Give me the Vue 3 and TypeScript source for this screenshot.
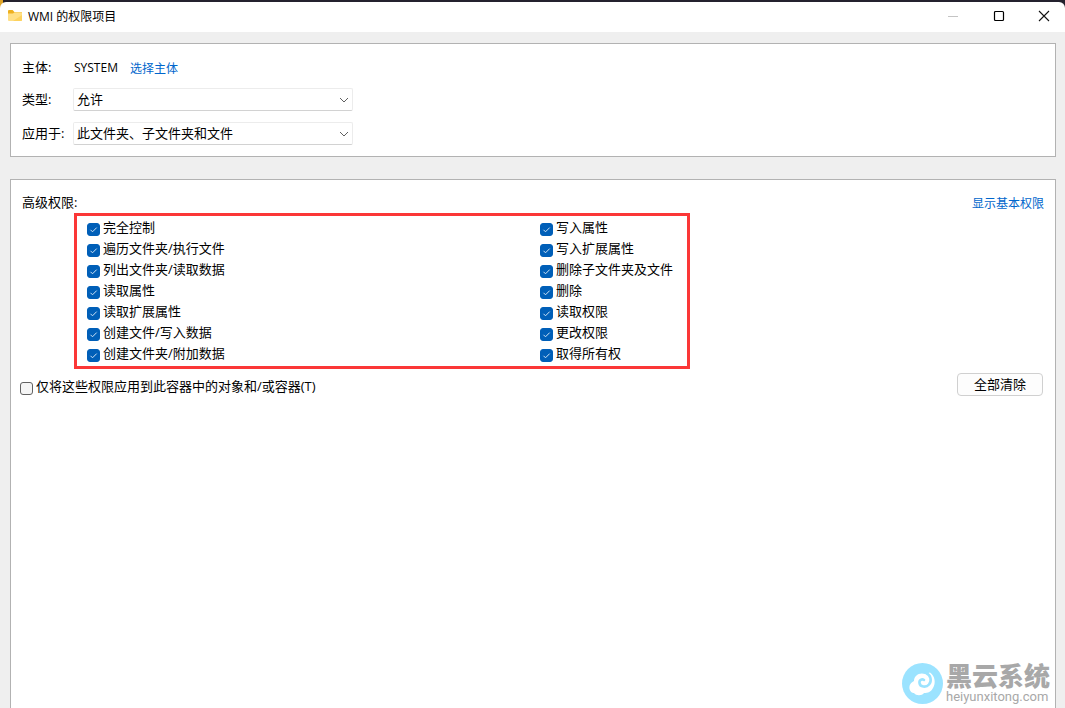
<script setup lang="ts">
import { ref } from 'vue'

interface Permission {
  id: string
  label: string
  checked: boolean
}

const make = (prefix: string, labels: string[]): Permission[] =>
  labels.map((label, i) => ({ id: `${prefix}-${i}`, label, checked: true }))

const columns = ref<Permission[][]>([
  make('left', [
    '完全控制',
    '遍历文件夹/执行文件',
    '列出文件夹/读取数据',
    '读取属性',
    '读取扩展属性',
    '创建文件/写入数据',
    '创建文件夹/附加数据',
  ]),
  make('right', ['写入属性', '写入扩展属性', '删除子文件夹及文件', '删除', '读取权限', '更改权限', '取得所有权']),
])

const kind = ref('允许')
const scope = ref('此文件夹、子文件夹和文件')
const onlyContainer = ref(false)

function clearAll(): void {
  columns.value.forEach((col) => col.forEach((p) => (p.checked = false)))
}
</script>

<template>
  <div class="window">
    <header class="titlebar">
      <svg class="folder" width="14" height="12" viewBox="0 0 14 12" aria-hidden="true">
        <path d="M0 1Q0 0 1 0H4.6L6.4 2H13Q14 2 14 3V6H0Z" fill="#eeb01f" />
        <path d="M0 3.4H5L6.6 2.2H13Q14 2.2 14 3.2V10Q14 11 13 11H1Q0 11 0 10Z" fill="#ffdf85" />
        <path d="M14 5V10Q14 11 13 11H5Z" fill="#fdd25e" />
      </svg>
      <h1>WMI 的权限项目</h1>
      <button type="button" aria-label="最小化" disabled>
        <svg width="12" height="12" viewBox="0 0 12 12"><path d="M1 6.5H11" stroke="#c4c4c4" /></svg>
      </button>
      <button type="button" aria-label="最大化">
        <svg width="12" height="12" viewBox="0 0 12 12">
          <rect x="1.5" y="1.5" width="9" height="9" rx="1" fill="none" stroke="#000" stroke-width="1.2" />
        </svg>
      </button>
      <button type="button" aria-label="关闭">
        <svg width="12" height="12" viewBox="0 0 12 12">
          <path d="M1 1L11 11M11 1L1 11" stroke="#111" stroke-width="1.1" />
        </svg>
      </button>
    </header>

    <main class="content">
      <section class="panel subject">
        <span>主体:</span>
        <div class="principal">
          <span class="account">SYSTEM</span>
          <a href="#">选择主体</a>
        </div>
        <label for="kind">类型:</label>
        <div class="combo">
          <select id="kind" v-model="kind">
            <option>允许</option>
            <option>拒绝</option>
          </select>
          <svg width="10" height="6" viewBox="0 0 10 6"><path d="M1 1L5 5L9 1" /></svg>
        </div>
        <label for="scope">应用于:</label>
        <div class="combo">
          <select id="scope" v-model="scope">
            <option>此文件夹、子文件夹和文件</option>
            <option>只有该文件夹</option>
          </select>
          <svg width="10" height="6" viewBox="0 0 10 6"><path d="M1 1L5 5L9 1" /></svg>
        </div>
      </section>

      <section class="panel permissions">
        <div class="heading">
          <h2>高级权限:</h2>
          <a href="#">显示基本权限</a>
        </div>
        <div class="marked">
          <ul v-for="(column, c) in columns" :key="c">
            <li v-for="item in column" :key="item.id">
              <input :id="item.id" v-model="item.checked" type="checkbox" />
              <label :for="item.id">{{ item.label }}</label>
            </li>
          </ul>
        </div>
        <div class="footer">
          <div class="only">
            <input id="only" v-model="onlyContainer" type="checkbox" />
            <label for="only">仅将这些权限应用到此容器中的对象和/或容器(T)</label>
          </div>
          <button type="button" class="clear" @click="clearAll">全部清除</button>
        </div>
      </section>
    </main>

    <div class="watermark">
      <svg width="41" height="41" viewBox="0 0 41 41" aria-hidden="true">
        <circle cx="20.5" cy="20.5" r="20.5" fill="#9be3ff" />
        <path
          d="M12 18C12 13 17 9 23 11L28 9.5C33 13 34 20 31 25C29 29 26 30 22 30C20 33 14 33 12 30C7 30 5 21 12 18Z"
          fill="#fff"
        />
        <path
          d="M24 10C29 12 30 18 27 21.5C24 25 18 24 17.5 20C17 17 20 15.5 22 17"
          fill="none"
          stroke="#9be3ff"
          stroke-width="2.6"
          stroke-linecap="round"
        />
      </svg>
      <div class="brand">
        <strong>黑云系统</strong>
        <span>heiyunxitong.com</span>
      </div>
    </div>
  </div>
</template>

<style>
body {
  background: #efefef;
}
</style>

<style scoped>
.window {
  position: relative;
  display: flex;
  flex-direction: column;
  box-sizing: border-box;
  height: 100vh;
  overflow: hidden;
  padding-top: 2px;
  background: linear-gradient(90deg, #e0a52a 3px, #24212e 3px);
  color: #000;
  font-family: 'Open Sans', 'Noto Sans CJK SC', sans-serif;
  font-size: 13px;
  line-height: 21px;
}

h1,
h2 {
  margin: 0;
  font-size: inherit;
  font-weight: 400;
}

a {
  padding-top: 1px;
  color: #0066cc;
  font-size: 12px;
  text-decoration: none;
}

button {
  padding: 0;
  font: inherit;
}

.titlebar {
  display: flex;
  align-items: center;
  box-sizing: border-box;
  height: 30px;
  padding: 0 0 2px 8px;
  border-radius: 6px 6px 0 0;
  background: #fff;
}

.titlebar h1 {
  flex: 1;
  margin-left: 6px;
  font-size: 12px;
}

.titlebar button {
  display: flex;
  align-items: center;
  justify-content: center;
  width: 46px;
  height: 28px;
  border: 0;
  background: none;
}

.titlebar button:last-child {
  width: 43px;
}

.content {
  flex: 1;
  display: flex;
  flex-direction: column;
  gap: 22px;
  padding: 11px 9px 0 10px;
  background: #efefef;
}

.panel {
  border: 1px solid #b2b2b2;
  background: #fff;
}

.subject {
  display: grid;
  grid-template-columns: 40px 280px;
  grid-template-rows: 19px 23px 23px;
  column-gap: 11px;
  row-gap: 11px;
  align-items: center;
  padding: 14px 11px 11px;
  line-height: 19px;
  white-space: nowrap;
}

.principal {
  display: flex;
  gap: 12px;
  padding-left: 1px;
}

.account {
  font-size: 12px;
}

.combo {
  position: relative;
  height: 23px;
}

.combo select {
  width: 100%;
  height: 23px;
  padding: 0 24px 0 3px;
  appearance: none;
  border: 1px solid #ececec;
  border-bottom-color: #d2d2d2;
  border-radius: 2px;
  background: #fff;
  color: #000;
  font: inherit;
}

.combo svg {
  position: absolute;
  top: 9px;
  right: 4px;
  pointer-events: none;
}

.combo path {
  fill: none;
  stroke: #606060;
}

.permissions {
  flex: 1;
  padding: 12px 11px 0 9px;
  border-bottom: 0;
}

.heading {
  display: flex;
  justify-content: space-between;
  height: 21px;
  padding-left: 2px;
}

.marked {
  display: flex;
  box-sizing: border-box;
  width: 616px;
  margin-left: 54px;
  padding: 1px 10px 2px;
  border: 3px solid #fb3737;
}

ul {
  flex: none;
  width: 453px;
  margin: 0;
  padding: 0;
  list-style: none;
}

ul:last-child {
  width: auto;
}

li,
.only {
  display: flex;
  align-items: center;
  gap: 3px;
  height: 21px;
}

input {
  flex: none;
  width: 13px;
  height: 13px;
  margin: 4px 0 0;
  appearance: none;
  border: 1px solid #626262;
  border-radius: 3px;
  background: #f5f5f5;
}

input:checked {
  border-color: #005fb8;
  background: #005fb8
    url("data:image/svg+xml,%3Csvg xmlns='http://www.w3.org/2000/svg' viewBox='0 0 11 11'%3E%3Cpath d='M2.5 5.8L4.5 7.8L8.7 3.6' fill='none' stroke='%23cfe3f5'/%3E%3C/svg%3E");
}

.footer {
  display: flex;
  justify-content: space-between;
  padding-top: 4px;
}

.only {
  margin-top: 3px;
}

.clear {
  box-sizing: border-box;
  width: 86px;
  height: 23px;
  margin-right: 1px;
  border: 1px solid #d0d0d0;
  border-radius: 4px;
  background: #fdfdfd;
  color: #000;
  line-height: 19px;
}

.watermark {
  position: absolute;
  right: 15px;
  bottom: 4px;
  display: flex;
  align-items: center;
  gap: 3px;
  color: #a8a8a8;
}

.brand {
  display: flex;
  flex-direction: column;
}

.brand strong {
  font-size: 26px;
  font-weight: 900;
  line-height: 28px;
}

.brand span {
  font-family: Roboto, sans-serif;
  font-size: 13px;
  line-height: 14px;
}
</style>
